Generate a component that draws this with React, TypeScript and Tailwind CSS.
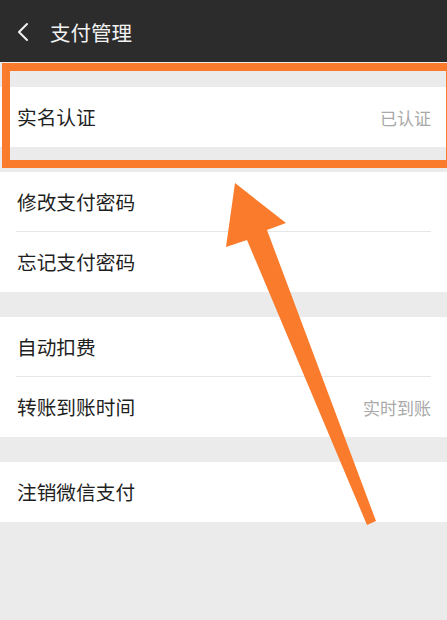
import React from 'react'

interface Row { label: string; value?: string }

const groups: Row[][] = [
  [{ label: '实名认证', value: '已认证' }],
  [{ label: '修改支付密码' }, { label: '忘记支付密码' }],
  [{ label: '自动扣费' }, { label: '转账到账时间', value: '实时到账' }],
  [{ label: '注销微信支付' }],
]

const font = { fontFamily: '"Noto Sans CJK SC", "Noto Sans", sans-serif' }

function Header() {
  return (
    <div className="h-[62px] bg-[#2c2c2c] flex items-center">
      <svg width="14" height="20" viewBox="0 0 14 20" className="ml-[16px] mt-[2px]">
        <path d="M11 2 L3 10 L11 18" fill="none" stroke="#f2f2f2" strokeWidth="2" strokeLinecap="round" strokeLinejoin="round" />
      </svg>
      <span className="ml-[20px] mt-[2px] text-[20.5px] text-[#f2f2f2] leading-none">支付管理</span>
    </div>
  )
}

function Group({ rows }: { rows: Row[] }) {
  return (
    <div className="bg-white">
      {rows.map((r, i) => (
        <div key={r.label}>
          {i > 0 && <div className="relative -mt-px mx-[16px] h-px bg-[#e6e6e6]" />}
          <div className="h-[60px] flex items-center justify-between pl-[17px] pr-[16px]">
            <span className="text-[19.7px] text-[#1f1f1f] leading-none">{r.label}</span>
            {r.value && <span className="text-[17px] text-[#a9a9a9] leading-none">{r.value}</span>}
          </div>
        </div>
      ))}
    </div>
  )
}

export default function App() {
  return (
    <div className="relative w-full min-h-[620px] bg-[#ebebeb] overflow-hidden" style={font}>
      <Header />
      <div className="flex flex-col gap-[25px] pt-[25px]">
        {groups.map((g, i) => <Group key={i} rows={g} />)}
      </div>

      {/* highlight box */}
      <div className="absolute left-[2px] top-[63px] w-[452px] h-[105px] border-[8px] border-[#f97b2b] pointer-events-none" />

      {/* arrow */}
      <svg className="absolute left-0 top-0 pointer-events-none" width="447" height="620" viewBox="0 0 447 620">
        <polygon
          points="235,183 286,223 267,230 376,521 367,525 247,240 226,247"
          fill="#f97b2b"
        />
      </svg>
    </div>
  )
}
